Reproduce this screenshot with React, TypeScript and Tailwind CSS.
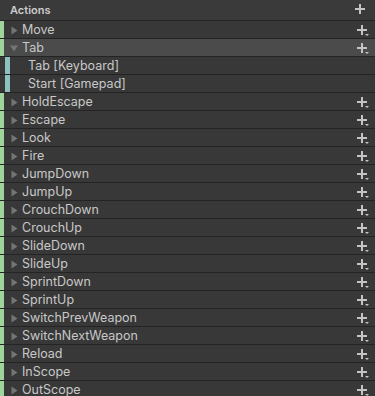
import React from 'react';

type Row = { name: string; kind: 'action' | 'binding'; expanded?: boolean; selected?: boolean };

const rows: Row[] = [
  { name: 'Move', kind: 'action' },
  { name: 'Tab', kind: 'action', expanded: true, selected: true },
  { name: 'Tab [Keyboard]', kind: 'binding' },
  { name: 'Start [Gamepad]', kind: 'binding' },
  { name: 'HoldEscape', kind: 'action' },
  { name: 'Escape', kind: 'action' },
  { name: 'Look', kind: 'action' },
  { name: 'Fire', kind: 'action' },
  { name: 'JumpDown', kind: 'action' },
  { name: 'JumpUp', kind: 'action' },
  { name: 'CrouchDown', kind: 'action' },
  { name: 'CrouchUp', kind: 'action' },
  { name: 'SlideDown', kind: 'action' },
  { name: 'SlideUp', kind: 'action' },
  { name: 'SprintDown', kind: 'action' },
  { name: 'SprintUp', kind: 'action' },
  { name: 'SwitchPrevWeapon', kind: 'action' },
  { name: 'SwitchNextWeapon', kind: 'action' },
  { name: 'Reload', kind: 'action' },
  { name: 'InScope', kind: 'action' },
  { name: 'OutScope', kind: 'action' },
];

function PlusIcon({ dropdown }: { dropdown?: boolean }) {
  return (
    <svg width="14" height="14" viewBox="0 0 14 14">
      <rect x="5" y="1" width="2" height="10" fill="#c4c4c4" />
      <rect x="1" y="5" width="10" height="2" fill="#c4c4c4" />
      {dropdown && <path d="M9 10 L13 10 L11 12 Z" fill="#c4c4c4" />}
    </svg>
  );
}

function Arrow({ open }: { open?: boolean }) {
  return open ? (
    <svg width="9" height="9" viewBox="0 0 9 9">
      <path d="M0 1.5 L8 1.5 L4 7.5 Z" fill="#747474" />
    </svg>
  ) : (
    <svg width="9" height="9" viewBox="0 0 9 9">
      <path d="M1.5 0.5 L7.5 4.5 L1.5 8.5 Z" fill="#747474" />
    </svg>
  );
}

export default function App() {
  return (
    <div
      className="w-[375px] h-[396px] overflow-hidden bg-[#383838] text-[#c8c8c8]"
      style={{ fontFamily: 'Inter, "Liberation Sans", sans-serif' }}
    >
      <div className="h-[20px] flex items-center justify-between pl-[10px] pr-[7px] bg-[#3a3a3a]">
        <span className="text-[11px] font-semibold text-[#cbcbcb]">Actions</span>
        <PlusIcon />
      </div>
      {rows.map((r) =>
        r.kind === 'action' ? (
          <div
            key={r.name}
            className={`h-[18px] flex items-center border-t border-[#242424] ${
              r.selected ? 'bg-[#4b4b4b]' : 'bg-[#383838]'
            }`}
          >
            <div className="w-[4px] h-full bg-[#9fd59b]" />
            <div className="w-[18px] flex justify-center pl-[2px] pt-[1px]">
              <Arrow open={r.expanded} />
            </div>
            <span className="flex-1 text-[12.5px] leading-none pt-[2px]">{r.name}</span>
            <div className="pr-[5px] pt-[2px]">
              <PlusIcon dropdown />
            </div>
          </div>
        ) : (
          <div key={r.name} className="h-[18px] flex items-center border-t border-[#242424] bg-[#383838]">
            <div className="w-[5px] h-full" />
            <div className="w-[5px] h-full bg-[#8fc0c1]" />
            <span className="pl-[18px] text-[12.5px] leading-none pt-[2px]">{r.name}</span>
          </div>
        )
      )}
    </div>
  );
}
